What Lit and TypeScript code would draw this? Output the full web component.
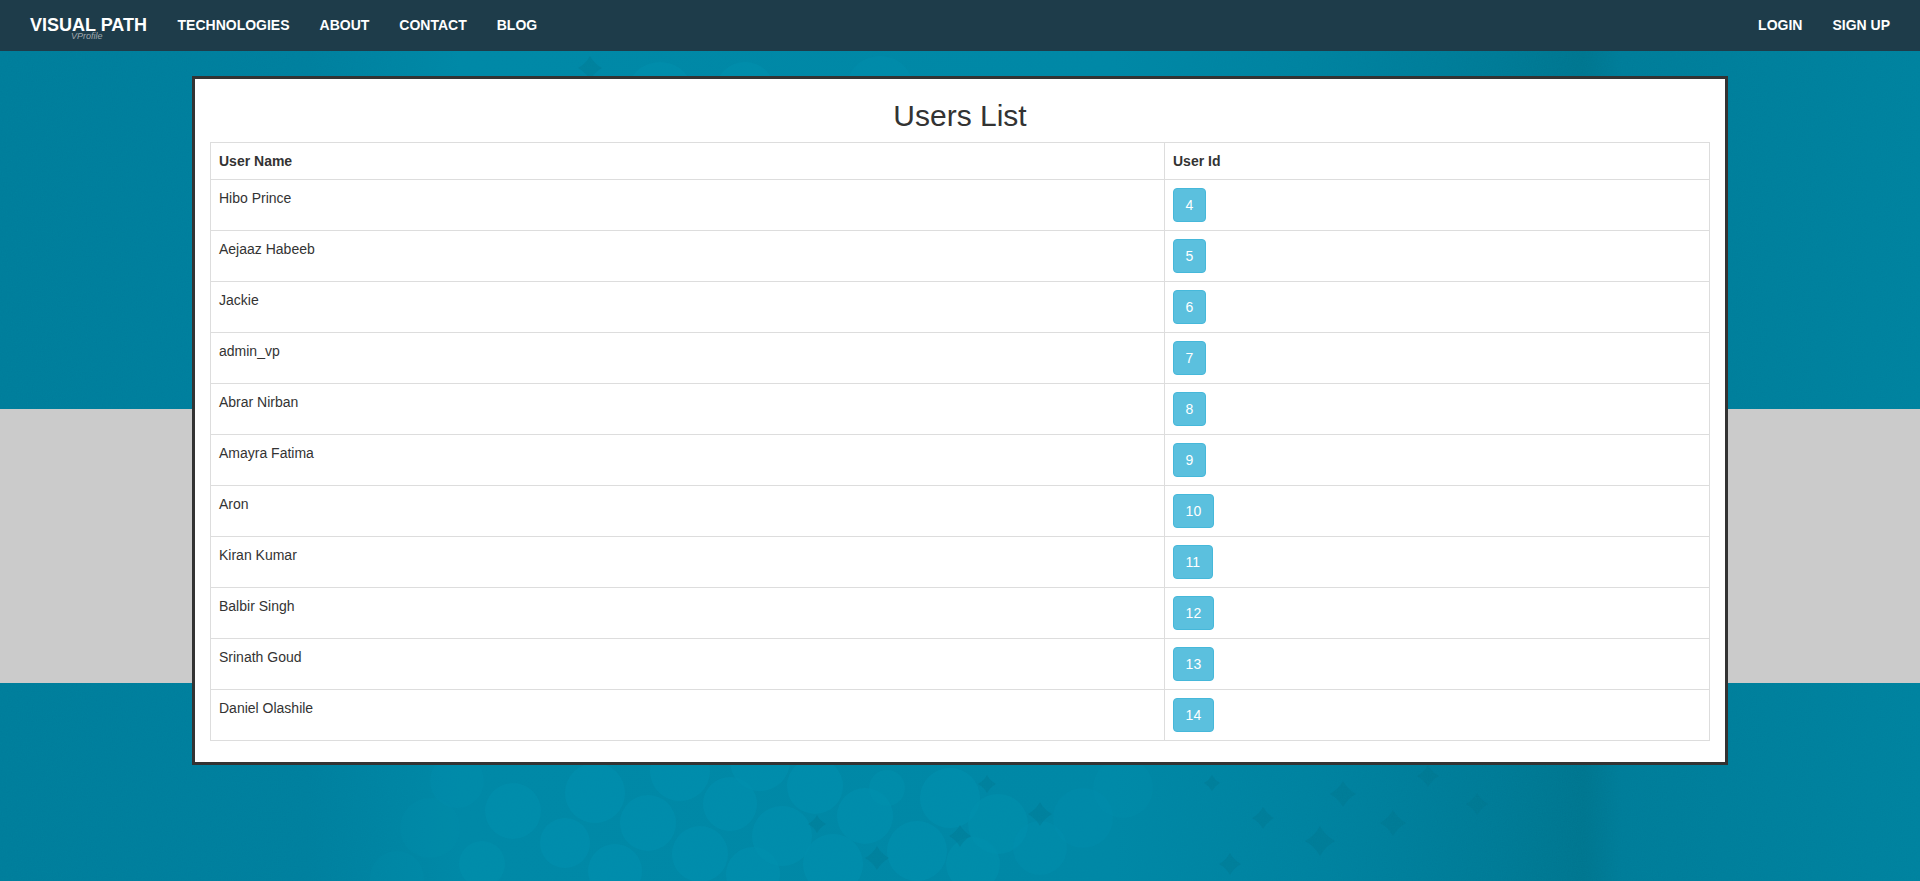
import { LitElement, html, css, svg } from "lit";
import { customElement } from "lit/decorators.js";

const USERS: [string, number][] = [
  ["Hibo Prince", 4],
  ["Aejaaz Habeeb", 5],
  ["Jackie", 6],
  ["admin_vp", 7],
  ["Abrar Nirban", 8],
  ["Amayra Fatima", 9],
  ["Aron", 10],
  ["Kiran Kumar", 11],
  ["Balbir Singh", 12],
  ["Srinath Goud", 13],
  ["Daniel Olashile", 14],
];

/* cx, cy, r, opacity: the pale discs of the page's background picture */
const BUBBLES: [number, number, number, number][] = [
  [397, 878, 27, 0.2],
  [430, 828, 30, 0.2],
  [457, 781, 27, 0.3],
  [482, 864, 23, 0.5],
  [513, 811, 28, 0.6],
  [565, 843, 25, 0.7],
  [595, 793, 30, 0.7],
  [615, 871, 27, 0.7],
  [648, 823, 28, 0.7],
  [680, 771, 30, 0.7],
  [700, 854, 28, 0.7],
  [730, 804, 27, 0.7],
  [753, 874, 27, 0.7],
  [760, 761, 30, 0.7],
  [782, 836, 30, 0.7],
  [815, 786, 28, 0.7],
  [833, 864, 30, 0.7],
  [865, 816, 28, 0.7],
  [887, 788, 18, 0.5],
  [917, 851, 30, 0.7],
  [950, 798, 30, 0.7],
  [973, 864, 27, 0.6],
  [998, 824, 30, 0.6],
  [1040, 848, 27, 0.4],
  [1083, 818, 30, 0.3],
  [1123, 788, 30, 0.25],
  [660, 96, 34, 0.6],
  [745, 92, 30, 0.6],
  [880, 90, 34, 0.4],
];

/* cx, cy, size: the dark four-pointed gaps between the discs */
const STARS: [number, number, number][] = [
  [817, 824, 9],
  [877, 858, 12],
  [960, 836, 11],
  [987, 784, 9],
  [1040, 814, 12],
  [1212, 783, 8],
  [1230, 864, 11],
  [1263, 818, 11],
  [1320, 841, 15],
  [1343, 794, 13],
  [1393, 823, 13],
  [1428, 776, 11],
  [1477, 804, 11],
  [590, 68, 12],
];

const starPath = (x: number, y: number, s: number) =>
  `M${x - s} ${y}Q${x - s * 0.35} ${y - s * 0.35} ${x} ${y - s}` +
  `Q${x + s * 0.35} ${y - s * 0.35} ${x + s} ${y}` +
  `Q${x + s * 0.35} ${y + s * 0.35} ${x} ${y + s}` +
  `Q${x - s * 0.35} ${y + s * 0.35} ${x - s} ${y}Z`;

@customElement("app-root")
export class AppRoot extends LitElement {
  static styles = css`
    :host {
      display: block;
      position: relative;
      min-height: 881px;
      overflow: hidden;
      font-family: "Liberation Sans", Arial, sans-serif;
      font-size: 14px;
      line-height: 20px;
      color: #333;
    }
    .backdrop {
      position: absolute;
      left: 0;
      top: 0;
      width: 1920px;
      height: 881px;
    }
    nav {
      position: relative;
      display: flex;
      justify-content: space-between;
      height: 51px;
      padding: 0 15px;
      box-sizing: border-box;
      background: #1e3c4a;
      color: #fff;
      font-weight: bold;
    }
    .group {
      display: flex;
    }
    .brand {
      position: relative;
      padding: 15px 15.5px 15px 15px;
      font-size: 18px;
      line-height: 20px;
    }
    .brand small {
      position: absolute;
      left: 56px;
      top: 31px;
      font-size: 9px;
      line-height: 10px;
      font-style: italic;
      font-weight: normal;
      color: #a0a8ac;
    }
    .link {
      padding: 15px;
      line-height: 20px;
    }
    .panel {
      position: relative;
      width: 1536px;
      box-sizing: border-box;
      margin: 25px auto 0;
      padding: 0 15px 21px;
      background: #fff;
      border: 3px solid #333;
    }
    h2 {
      margin: 0;
      padding: 20px 0 10px;
      font-size: 30px;
      line-height: 33px;
      font-weight: 500;
      text-align: center;
    }
    table {
      width: 100%;
      border-collapse: collapse;
      border: 1px solid #ddd;
    }
    th,
    td {
      padding: 8px;
      border: 1px solid #ddd;
      text-align: left;
      vertical-align: top;
    }
    .name {
      width: 954px;
      box-sizing: border-box;
    }
    .btn {
      display: inline-block;
      padding: 6px 11.6px;
      font: inherit;
      color: #fff;
      background: #5bc0de;
      border: 1px solid #46b8da;
      border-radius: 4px;
    }
  `;

  private backdrop() {
    return html`<svg class="backdrop" viewBox="0 0 1920 881" aria-hidden="true">
      <defs>
        <linearGradient id="teal" x1="0" x2="1" y1="0" y2="0">
          <stop offset="0" stop-color="#007d9b"></stop>
          <stop offset="0.16" stop-color="#007f9e"></stop>
          <stop offset="0.24" stop-color="#0088a7"></stop>
          <stop offset="0.58" stop-color="#0087a6"></stop>
          <stop offset="0.68" stop-color="#0082a0"></stop>
          <stop offset="0.78" stop-color="#007a96"></stop>
          <stop offset="0.825" stop-color="#00758f"></stop>
          <stop offset="0.845" stop-color="#007c99"></stop>
          <stop offset="1" stop-color="#00829f"></stop>
        </linearGradient>
        <filter id="grain" x="0" y="0" width="100%" height="100%">
          <feTurbulence type="fractalNoise" baseFrequency="0.8" numOctaves="2" seed="4"></feTurbulence>
          <feColorMatrix
            type="matrix"
            values="0 0 0 0 0  0 0 0 0 0.3  0 0 0 0 0.4  0 0 0 0.2 -0.04"
          ></feColorMatrix>
        </filter>
      </defs>
      <rect width="1920" height="881" fill="url(#teal)"></rect>
      ${BUBBLES.map(
        ([x, y, r, o]) =>
          svg`<circle cx=${x} cy=${y} r=${r} fill="#008fae" opacity=${o}></circle>`
      )}
      ${STARS.map(
        ([x, y, s]) =>
          svg`<path d=${starPath(x, y, s)} fill="#006f88" opacity="0.3"></path>`
      )}
      <rect width="1920" height="881" filter="url(#grain)"></rect>
      <rect y="409" width="1920" height="274" fill="#cbcbcb"></rect>
    </svg>`;
  }

  render() {
    return html`
      ${this.backdrop()}
      <nav>
        <div class="group">
          <div class="brand">VISUAL PATH<small>VProfile</small></div>
          <div class="link">TECHNOLOGIES</div>
          <div class="link">ABOUT</div>
          <div class="link">CONTACT</div>
          <div class="link">BLOG</div>
        </div>
        <div class="group">
          <div class="link">LOGIN</div>
          <div class="link">SIGN UP</div>
        </div>
      </nav>
      <div class="panel">
        <h2>Users List</h2>
        <table>
          <thead>
            <tr><th class="name">User Name</th><th>User Id</th></tr>
          </thead>
          <tbody>
            ${USERS.map(
              ([name, id]) => html`<tr>
                <td class="name">${name}</td>
                <td><span class="btn">${id}</span></td>
              </tr>`
            )}
          </tbody>
        </table>
      </div>
    `;
  }
}
